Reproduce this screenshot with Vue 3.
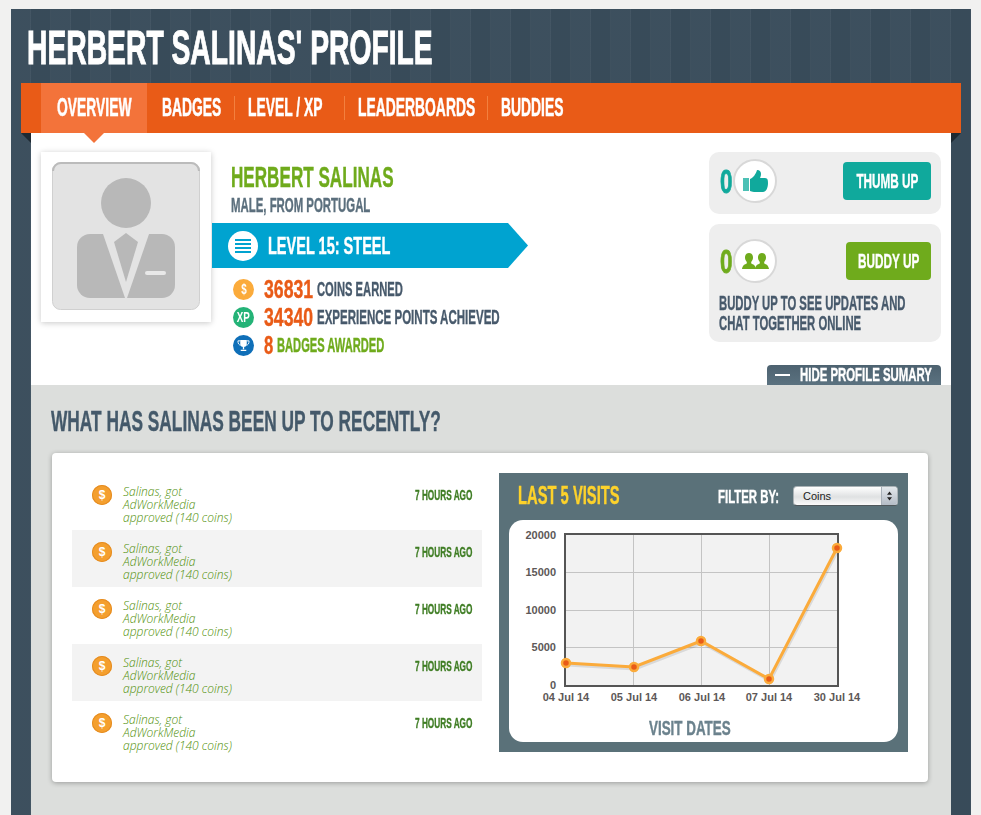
<template>
  <div class="page">
    <div class="panel">
      <h1 class="title cond">HERBERT SALINAS' PROFILE</h1>
      <nav class="ribbon">
        <a
          v-for="(tab, idx) in tabs"
          :key="tab"
          class="tab"
          :class="{ active: idx === 0, sep: idx > 1 }"
        ><span class="tab-label cond">{{ tab }}</span></a>
        <i class="fold left"></i>
        <i class="fold right"></i>
      </nav>

      <section class="summary">
        <div class="avatar-card">
          <svg class="avatar" viewBox="0 0 148 148" width="148" height="148">
            <rect x="0.5" y="0.5" width="147" height="147" rx="8" fill="#e3e3e3" stroke="#d0d0d0" />
            <path d="M1 9a8 8 0 0 1 8-8h130a8 8 0 0 1 8 8" fill="none" stroke="#bbb" stroke-width="2" />
            <circle cx="74" cy="41" r="25" fill="#b8b8b8" />
            <path d="M38 72h13l22 64H38a13 13 0 0 1-13-13V85a13 13 0 0 1 13-13z" fill="#b8b8b8" />
            <path d="M110 72H97l-22 64h35a13 13 0 0 0 13-13V85a13 13 0 0 0-13-13z" fill="#b8b8b8" />
            <path d="M74 71l12 9-12 40-12-40z" fill="#b8b8b8" />
            <rect x="93" y="109" width="21" height="4" rx="2" fill="#e8e8e8" />
          </svg>
        </div>

        <div class="identity">
          <h2 class="name cond">HERBERT SALINAS</h2>
          <p class="origin cond">MALE, FROM PORTUGAL</p>
          <div class="level">
            <span class="level-icon">
              <svg viewBox="0 0 16 16" width="16" height="16">
                <path d="M0 2h16M0 6h16M0 10h16M0 14h16" stroke="#00a3d0" stroke-width="2" />
              </svg>
            </span>
            <span class="level-label cond">LEVEL 15: STEEL</span>
          </div>
          <ul class="stats">
            <li>
              <span class="stat-icon coin"><span class="glyph cond">$</span></span>
              <b class="cond digits">36831</b>
              <span class="cond coins-label">COINS EARNED</span>
            </li>
            <li>
              <span class="stat-icon xp"><span class="glyph cond">XP</span></span>
              <b class="cond digits">34340</b>
              <span class="cond xp-label">EXPERIENCE POINTS ACHIEVED</span>
            </li>
            <li>
              <span class="stat-icon trophy">
                <svg viewBox="0 0 14 14" width="13" height="13">
                  <path d="M3.500 1h7v4a3.500 3.500 0 0 1-7 0z" fill="#fff" />
                  <path d="M3.500 2H1c0 3 1 4.500 3 4.500M10.500 2H13c0 3-1 4.500-3 4.500" fill="none" stroke="#fff" stroke-width="1" />
                  <path d="M6.300 8h1.400v3H6.300zM4 11.500h6V13H4z" fill="#fff" />
                </svg>
              </span>
              <b class="cond digit-one">8</b>
              <span class="cond badges-label">BADGES AWARDED</span>
            </li>
          </ul>
        </div>

        <div class="actions">
          <div class="action-box thumb">
            <div class="action-row">
              <span class="count teal cond">0</span>
              <span class="round">
                <svg viewBox="0 0 25 22" width="25" height="22">
                  <path d="M0 8h6v13H0z" fill="#4cc0b5" />
                  <path d="M7 9c3-1 6-5 7-9 3 0 4 2 4 4 0 2-1 4-1 4h5c3 0 3 3 3 5 0 5-2 9-5 9H11c-2 0-3-1-4-1z" fill="#10a99c" />
                </svg>
              </span>
              <button class="btn btn-teal"><span class="btn-label cond">THUMB UP</span></button>
            </div>
          </div>
          <div class="action-box buddy">
            <div class="action-row">
              <span class="count lime cond">0</span>
              <span class="round">
                <svg viewBox="0 0 27 16" width="27" height="16">
                  <path d="M7 0c2.600 0 4 2 4 4.600 0 2-.9 3.500-1.800 4.400v1.400c1.800.8 4.300 1.600 4.800 5.600H0c.5-4 3-4.800 4.800-5.600V9C3.900 8.100 3 6.600 3 4.600 3 2 4.400 0 7 0z" fill="#6fab1c" />
                  <path d="M20 0c2.600 0 4 2 4 4.600 0 2-.9 3.500-1.800 4.400v1.400c1.800.8 4.300 1.600 4.800 5.600H13c.5-4 3-4.800 4.800-5.600V9C16.900 8.100 16 6.600 16 4.600 16 2 17.400 0 20 0z" fill="#6fab1c" />
                </svg>
              </span>
              <button class="btn btn-lime"><span class="btn-label cond">BUDDY UP</span></button>
            </div>
            <p class="buddy-note cond">BUDDY UP TO SEE UPDATES AND<br />CHAT TOGETHER ONLINE</p>
          </div>
          <a class="hide-tab"><i class="dash"></i><span class="hide-label cond">HIDE PROFILE SUMARY</span></a>
        </div>
      </section>

      <section class="recent">
        <h3 class="recent-title cond">WHAT HAS SALINAS BEEN UP TO RECENTLY?</h3>
        <div class="recent-card">
          <ul class="feed">
            <li v-for="n in 5" :key="n" class="feed-row">
              <span class="feed-coin">$</span>
              <span class="feed-text">Salinas, got<br />AdWorkMedia<br />approved (140 coins)</span>
              <span class="feed-time cond">7 HOURS AGO</span>
            </li>
          </ul>

          <div class="visits">
            <div class="visits-head">
              <span class="visits-title cond">LAST 5 VISITS</span>
              <span class="filter-label cond">FILTER BY:</span>
              <div class="select">
                <span class="select-value">Coins</span>
                <span class="select-arrows">
                  <svg viewBox="0 0 6 11" width="5" height="10">
                    <path d="M3 0l3 4H0zM3 11L0 7h6z" fill="#222" />
                  </svg>
                </span>
              </div>
            </div>
            <div class="chart-box">
              <svg class="chart" viewBox="0 0 389 196" width="389" height="196">
                <rect x="56" y="14" width="273" height="152" fill="#f2f2f2" />
                <path
                  v-for="x in [124.5, 192.5, 260.5]"
                  :key="x"
                  :d="`M${x} 14V166`"
                  stroke="#c4c4c4"
                />
                <path
                  v-for="y in [52.5, 90.5, 127.5]"
                  :key="y"
                  :d="`M56 ${y}H329`"
                  stroke="#c4c4c4"
                />
                <rect x="56" y="14" width="273" height="152" fill="none" stroke="#555" stroke-width="2" />
                <polyline :points="shadowPoints" fill="none" stroke="#000" stroke-opacity="0.1" stroke-width="3" />
                <polyline :points="linePoints" fill="none" stroke="#fbab3b" stroke-width="3" />
                <circle
                  v-for="p in points"
                  :key="p[0]"
                  :cx="p[0]"
                  :cy="p[1]"
                  r="4"
                  fill="#e95b17"
                  stroke="#fbab3b"
                  stroke-width="2.500"
                />
                <g class="axis">
                  <text v-for="t in yTicks" :key="t.label" x="47" :y="t.y" text-anchor="end">{{ t.label }}</text>
                  <text v-for="t in xTicks" :key="t.label" :x="t.x" y="181" text-anchor="middle">{{ t.label }}</text>
                </g>
              </svg>
              <div class="axis-title cond">VISIT DATES</div>
            </div>
          </div>
        </div>
      </section>
    </div>
  </div>
</template>

<script setup>
const tabs = ['OVERVIEW', 'BADGES', 'LEVEL / XP', 'LEADERBOARDS', 'BUDDIES']

const points = [
  [57, 143],
  [125, 147],
  [192, 121],
  [260, 159],
  [328, 28],
]
const linePoints = points.map((p) => p.join(',')).join(' ')
const shadowPoints = points.map((p) => `${p[0] + 1},${p[1] + 2}`).join(' ')

const yTicks = [
  { label: '20000', y: 19 },
  { label: '15000', y: 56 },
  { label: '10000', y: 94 },
  { label: '5000', y: 131 },
  { label: '0', y: 169 },
]
const xTicks = [
  { label: '04 Jul 14', x: 57 },
  { label: '05 Jul 14', x: 125 },
  { label: '06 Jul 14', x: 193 },
  { label: '07 Jul 14', x: 260 },
  { label: '30 Jul 14', x: 328 },
]
</script>

<style>
html,
body {
  margin: 0;
  background: #f1f1f0;
}
</style>

<style scoped>
.page {
  height: 815px;
  overflow: hidden;
  padding: 9px 10px 0 11px;
  box-sizing: border-box;
  background: #f1f1f0;
  font-family: "Liberation Sans", sans-serif;
}

/* no condensed display face here, so bold sans gets squeezed per element */
.cond {
  display: block;
  flex: none;
  font-weight: 700;
  white-space: nowrap;
  transform-origin: left center;
  -webkit-text-stroke: 0.4px currentColor;
}

.panel {
  width: 960px;
  height: 806px;
  background-color: #394c5b;
  background-image:
    repeating-linear-gradient(90deg, transparent 0 19px, rgba(255, 255, 255, 0.035) 19px 20px),
    repeating-linear-gradient(90deg, rgba(255, 255, 255, 0.02) 0 20px, rgba(0, 0, 0, 0.02) 20px 40px);
}

.title {
  margin: 0 0 0 16px;
  width: 405px;
  height: 74px;
  font-size: 48px;
  line-height: 77px;
  color: #fff;
  transform: scaleX(0.589);
  -webkit-text-stroke: 1px currentColor;
}

.ribbon {
  position: relative;
  display: flex;
  height: 50px;
  margin: 0 10px;
  padding-left: 20px;
  background: #e95b17;
}

.tab {
  display: flex;
  align-items: center;
  position: relative;
  box-sizing: border-box;
  padding-left: 15px;
  height: 50px;
}

.tab:nth-child(1) {
  width: 106px;
  padding-left: 16px;
}

.tab:nth-child(2) {
  width: 87px;
}

.tab:nth-child(3) {
  width: 110px;
}

.tab:nth-child(4) {
  width: 143px;
}

.tab:nth-child(5) {
  width: 100px;
}

.tab.sep::before {
  content: "";
  position: absolute;
  left: 0;
  top: 13px;
  height: 24px;
  width: 1px;
  background: #f3803f;
}

.tab.sep {
  padding-left: 14px;
}

.tab.active {
  background: #f3733a;
}

.tab.active::after {
  content: "";
  position: absolute;
  left: 43px;
  bottom: -10px;
  border-style: solid;
  border-width: 10px 10px 0;
  border-color: #f3733a transparent transparent;
}

.tab-label {
  width: 60px;
  font-size: 25px;
  margin-top: -1px;
  color: #fff;
  transform: scaleX(0.555);
  -webkit-text-stroke: 0.5px currentColor;
}

.fold {
  position: absolute;
  top: 50px;
  width: 0;
  height: 0;
  border-top: 10px solid #1e2a33;
}

.fold.left {
  left: 0;
  border-left: 10px solid transparent;
}

.fold.right {
  right: 0;
  border-right: 10px solid transparent;
}

.summary {
  display: flex;
  height: 252px;
  margin: 0 20px;
  background: #fff;
  box-sizing: border-box;
  padding: 19px 10px 0;
}

.avatar-card {
  flex: none;
  width: 170px;
  height: 170px;
  padding: 10px 11px;
  box-sizing: border-box;
  background: #fff;
  box-shadow: 0 1px 6px rgba(0, 0, 0, 0.22);
}

.avatar {
  display: block;
  filter: blur(0.5px);
}

.identity {
  width: 317px;
  flex: none;
  margin-left: 1px;
}

.name {
  margin: 11px 0 0 19px;
  width: 162px;
  height: 28px;
  font-size: 29px;
  line-height: 28px;
  color: #6fab1c;
  transform: scaleX(0.59);
}

.origin {
  margin: 4px 0 0 19px;
  width: 139px;
  font-size: 20px;
  line-height: 20px;
  color: #5b6f7d;
  transform: scaleX(0.57);
}

.level {
  display: flex;
  align-items: center;
  height: 45px;
  margin-top: 8px;
  padding-left: 16px;
  background: #00a3d0;
  clip-path: polygon(0 0, 296px 0, 316px 50%, 296px 100%, 0 100%);
}

.level-icon {
  display: flex;
  flex: none;
  align-items: center;
  justify-content: center;
  width: 30px;
  height: 30px;
  margin-right: 10px;
  border-radius: 50%;
  background: #fff;
}

.level-label {
  width: 122px;
  font-size: 24px;
  color: #fff;
  transform: scaleX(0.605);
}

.stats {
  list-style: none;
  margin: 7px 0 0 21px;
  padding: 0;
}

.stats li {
  display: flex;
  align-items: center;
  height: 28px;
  font-size: 20px;
  color: #47596b;
}

.digits,
.digit-one {
  margin-left: 10px;
  font-size: 26px;
  color: #e95b17;
}

.digits {
  width: 53px;
  transform: scaleX(0.68);
}

.digit-one {
  width: 13px;
  transform: scaleX(0.64);
}

.coins-label {
  width: 86px;
  transform: scaleX(0.56);
}

.xp-label {
  width: 182px;
  transform: scaleX(0.576);
}

.badges-label {
  width: 107px;
  color: #6fab1c;
  transform: scaleX(0.557);
}

.stat-icon {
  display: flex;
  flex: none;
  align-items: center;
  justify-content: center;
  width: 21px;
  height: 21px;
  border-radius: 50%;
}

.glyph {
  font-size: 14px;
  color: #fff;
  transform: scaleX(0.7);
  transform-origin: center;
  -webkit-text-stroke: 0;
}

.stat-icon.coin {
  background: #fbab3b;
}

.stat-icon.xp {
  background: #24b377;
}

.stat-icon.trophy {
  background: #0f6fb8;
}

.actions {
  position: relative;
  flex: none;
  width: 232px;
  margin-left: auto;
}

.action-box {
  background: #eee;
  border-radius: 10px;
  box-sizing: border-box;
}

.action-box.thumb {
  height: 62px;
  padding: 10px 10px 0 11px;
}

.action-box.buddy {
  height: 118px;
  margin-top: 10px;
  padding: 18px 10px 0 11px;
}

.action-row {
  display: flex;
  align-items: center;
  height: 38px;
}

.count {
  width: 13px;
  font-size: 34px;
  transform: scaleX(0.66);
  -webkit-text-stroke: 0.8px currentColor;
}

.count.teal {
  color: #10a99c;
}

.count.lime {
  color: #6fab1c;
}

.round {
  display: flex;
  flex: none;
  align-items: center;
  justify-content: center;
  width: 40px;
  height: 40px;
  border: 2px solid #d8d8d8;
  border-radius: 50%;
  background: #fff;
}

.btn {
  display: flex;
  align-items: center;
  justify-content: center;
  height: 38px;
  padding: 0;
  margin-left: auto;
  border: 0;
  border-radius: 4px;
  font-family: inherit;
}

.btn-teal {
  width: 88px;
  background: #10a99c;
}

.btn-lime {
  width: 85px;
  background: #6fab1c;
}

.btn-label {
  font-size: 21px;
  color: #fff;
  transform: scaleX(0.56);
  transform-origin: center;
}

.buddy-note {
  width: 185px;
  margin: 13px 0 0 -1px;
  font-size: 20px;
  line-height: 20px;
  color: #47596b;
  transform: scaleX(0.565);
}

.hide-tab {
  position: absolute;
  right: 0;
  top: 213px;
  display: flex;
  align-items: center;
  width: 174px;
  height: 20px;
  box-sizing: border-box;
  padding-left: 8px;
  border-radius: 4px 4px 0 0;
  background: linear-gradient(#4d6270, #5b7280);
}

.hide-label {
  width: 132px;
  font-size: 19px;
  color: #fff;
  transform: scaleX(0.6);
}

.dash {
  flex: none;
  width: 15px;
  height: 2px;
  margin-right: 10px;
  background: #fff;
}

.recent {
  height: 430px;
  margin: 0 20px;
  padding: 24px 21px 0;
  box-sizing: border-box;
  background-color: #dcdedc;
}

.recent-title {
  width: 390px;
  height: 44px;
  margin: 0 0 0 -1px;
  font-size: 29px;
  line-height: 25px;
  color: #44596a;
  transform: scaleX(0.597);
}

.recent-card {
  display: flex;
  width: 876px;
  height: 329px;
  padding: 20px 20px 0;
  box-sizing: border-box;
  background: #fff;
  border-radius: 4px;
  box-shadow: 0 1px 5px rgba(0, 0, 0, 0.3);
}

.feed {
  flex: none;
  width: 410px;
  margin: 0;
  padding: 0;
  list-style: none;
}

.feed-row {
  display: flex;
  height: 57px;
  box-sizing: border-box;
  padding: 12px 10px 0 20px;
}

.feed-row:nth-child(even) {
  background: #f3f3f3;
}

.feed-coin {
  display: flex;
  flex: none;
  align-items: center;
  justify-content: center;
  width: 20px;
  height: 20px;
  border-radius: 50%;
  background: #f49f2e;
  box-shadow: inset 0 0 0 1px #e58c22;
  font-size: 12px;
  font-weight: 700;
  color: #fff;
}

.feed-text {
  margin: 0 0 0 11px;
  font-family: "Open Sans", sans-serif;
  font-size: 12px;
  line-height: 13px;
  font-style: italic;
  font-weight: 300;
  color: #4f8f08;
}

.feed-time {
  width: 57px;
  margin: 3px 0 0 auto;
  font-size: 15px;
  line-height: 14px;
  color: #3f7d24;
  transform: scaleX(0.55);
}

.visits {
  flex: none;
  width: 409px;
  height: 279px;
  margin-left: 17px;
  padding: 0 10px;
  box-sizing: border-box;
  background: #5a7179;
}

.visits-head {
  display: flex;
  align-items: center;
  height: 47px;
}

.visits-title {
  width: 102px;
  margin: -2px 0 0 9px;
  font-size: 25px;
  color: #fdd22b;
  transform: scaleX(0.59);
}

.filter-label {
  width: 63px;
  margin-left: auto;
  font-size: 19px;
  color: #fff;
  transform: scaleX(0.6);
}

.select {
  display: flex;
  flex: none;
  align-items: center;
  width: 105px;
  height: 20px;
  margin: -1px 0 0 12px;
  box-sizing: border-box;
  border: 1px solid #aab2b6;
  border-bottom-color: #50585c;
  border-radius: 4px;
  background: linear-gradient(#fff, #dfe1e2 55%, #fbfbfb);
  font-size: 11px;
  color: #222;
}

.select-value {
  flex: 1;
  padding-left: 9px;
}

.select-arrows {
  display: flex;
  align-items: center;
  justify-content: center;
  width: 16px;
  height: 18px;
  border-left: 1px solid #a8b0b8;
  box-sizing: border-box;
  background: linear-gradient(#e4e8ec, #b4bcc6);
  border-radius: 0 3px 3px 0;
}

.chart-box {
  height: 222px;
  background: #fff;
  border-radius: 14px;
  overflow: hidden;
}

.chart {
  display: block;
}

.axis text {
  font-family: "Liberation Sans", sans-serif;
  font-size: 11px;
  font-weight: 700;
  fill: #5d5857;
}

.axis-title {
  width: 82px;
  margin: 2px 0 0 140px;
  font-size: 20px;
  line-height: 20px;
  color: #6b828d;
  transform: scaleX(0.67);
}
</style>
